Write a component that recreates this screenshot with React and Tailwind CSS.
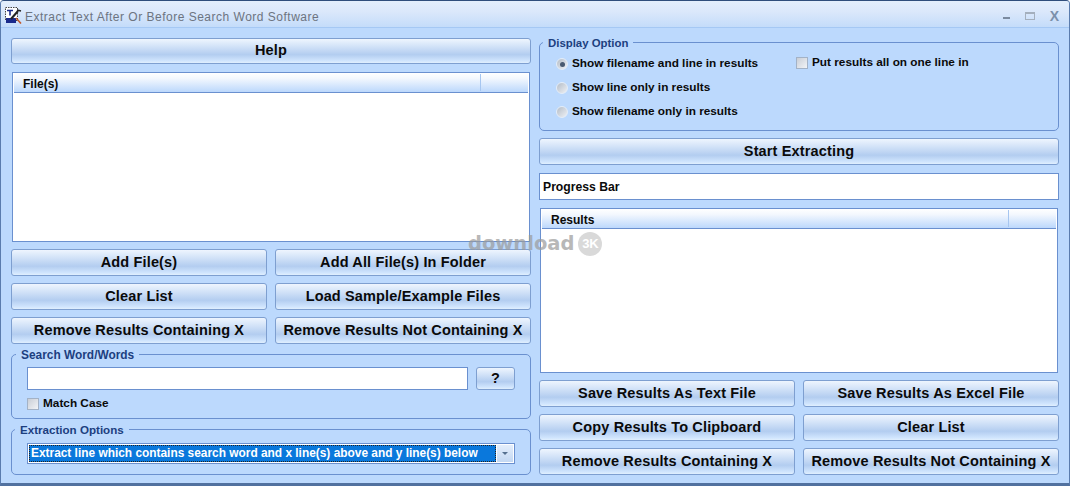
import React from "react";

const font = "font-['Liberation_Sans',Arial,sans-serif]";

const Btn = ({ children, className = "" }) => (
  <button className={`h-[27px] rounded-[3px] border border-[#7e9fd0] bg-[linear-gradient(#eef5fe_0%,#d3e3f8_30%,#b3cdf0_65%,#cfe4fd_90%,#e0effe_100%)] text-[14.5px] font-bold leading-none tracking-[0.15px] text-[#0a0a0a] whitespace-nowrap ${className}`}>
    {children}
  </button>
);

const Group = ({ title, className = "", titleClass = "left-[4px] text-[11.9px]", children }) => (
  <div className={`relative rounded-[5px] border border-[#6a90cf] ${className}`}>
    <span className={`absolute -top-[7px] bg-[#bcd9fd] px-[5px] font-bold leading-[14px] text-[#1c3f80] ${titleClass}`}>
      {title}
    </span>
    {children}
  </div>
);

const Radio = ({ checked, label }) => (
  <div className="flex h-[14px] items-center gap-[4px] text-[11.8px] font-bold text-[#0a0a0a]">
    <span className="flex h-[12px] w-[12px] items-center justify-center rounded-full border border-[#e4edf8] bg-[linear-gradient(135deg,#b4bcc6,#eef1f5)]">
      {checked && <span className="h-[5px] w-[5px] rounded-full bg-[#4a5a70]" />}
    </span>
    {label}
  </div>
);

const Check = ({ label, className = "" }) => (
  <div className={`flex items-center gap-[4px] text-[11.8px] font-bold text-[#0a0a0a] ${className}`}>
    <span className="h-[12px] w-[12px] border border-[#a3b2c6] bg-[linear-gradient(135deg,#c9ced6,#f2f4f7)]" />
    {label}
  </div>
);

const ListBox = ({ title, className = "" }) => (
  <div className={`mx-px flex flex-col border border-[#6a90cf] bg-white px-px ${className}`}>
    <div className="flex h-[20px] border-b border-[#6a90cf] bg-[linear-gradient(#ffffff,#f2f7fe_30%,#bcd8fc)]">
      <div className="flex-1 text-[12px] font-bold leading-[22px] text-[#0a0a0a]">{title}</div>
      <div className="my-[1px] h-[17px] w-[48px] border-l border-[#a6c6f0]" />
    </div>
  </div>
);

const Logo = () => (
  <svg width="17" height="17" viewBox="0 0 17 17" className="shrink-0">
    <rect x="0.5" y="0.5" width="12" height="13" fill="#fff" stroke="#444" strokeDasharray="1.5 1" />
    <path d="M2 3.5h6M5 3.5v5" stroke="#1a2a8c" strokeWidth="1.6" />
    <rect x="1" y="11" width="10" height="5" fill="#1a2a8c" />
    <path d="M6 12L13 4" stroke="#222" strokeWidth="2" />
    <path d="M11 11l5 5.5" stroke="#c0572b" strokeWidth="1.6" />
    <path d="M12 3l4 1" stroke="#222" strokeWidth="1.5" />
  </svg>
);

export default function App() {
  return (
    <div className={`${font} relative flex h-[486px] w-[1070px] flex-col overflow-hidden rounded-t-[4px] border-x border-b-[3px] border-t border-x-[#5a7cae] border-b-[#51719f] border-t-[#2f4d7c] bg-[#bcd9fd]`}>
      {/* title bar */}
      <div className="flex h-[27px] shrink-0 items-start border-b border-[#a5c8f4] bg-[linear-gradient(#e3eefc,#dbe8fb_40%,#c4dcfa)] pl-[4px] pr-[10px] pt-[6px]">
        <Logo />
        <span className="ml-[3px] mt-[3px] text-[12px] leading-[14px] tracking-[0.5px] text-[#6d7480]">
          Extract Text After Or Before Search Word Software
        </span>
        <div className="ml-auto flex items-start gap-[15px]">
          <span className="mt-[10px] h-[2px] w-[7px] bg-[#7b8ba0]" />
          <span className="mt-[5px] h-[8px] w-[10px] border border-t-2 border-[#a4afbd]" />
          <span className="text-[14px] font-bold leading-[18px] text-[#7b90ab]">X</span>
        </div>
      </div>

      {/* body */}
      <div className="flex flex-1 gap-[8px] pl-[10px] pr-[10px]">
        <div className="flex w-[520px] flex-col pt-[10px]">
          <Btn className="w-full !h-[26px] pb-[2px]">Help</Btn>
          <ListBox title={<span className="pl-[9px]">File(s)</span>} className="mt-[8px] h-[170px]" />
          <div className="mt-[7px] grid grid-cols-2 gap-x-[8px] gap-y-[7px]">
            <Btn>Add File(s)</Btn>
            <Btn>Add All File(s) In Folder</Btn>
            <Btn>Clear List</Btn>
            <Btn>Load Sample/Example Files</Btn>
            <Btn>Remove Results Containing X</Btn>
            <Btn>Remove Results Not Containing X</Btn>
          </div>
          <Group title="Search Word/Words" className="mt-[10px] h-[65px] pl-[15px] pr-[15px] pt-[12px]">
            <div className="flex gap-[8px]">
              <div className="h-[23px] flex-1 border border-[#6a90cf] bg-white" />
              <Btn className="!h-[23px] w-[39px]">?</Btn>
            </div>
            <Check label="Match Case" className="mt-[5px]" />
          </Group>
          <Group title="Extraction Options" titleClass="left-[3px] text-[11.6px]" className="mt-[10px] h-[46px] pl-[15px] pr-[15px] pt-[13px]">
            <div className="flex h-[21px] border border-[#6a90cf] bg-white p-[1px]">
              <div className="flex-1 overflow-hidden whitespace-nowrap border border-dotted border-[#222] bg-[#0a78dc] pl-[1px] text-[11.9px] font-bold leading-[15px] text-white">
                Extract line which contains search word and x line(s) above and y line(s) below
              </div>
              <div className="ml-[1px] flex w-[16px] items-center justify-center bg-[linear-gradient(#e4eefb,#c3d8f3)]">
                <span className="h-0 w-0 border-x-[3px] border-t-[3px] border-x-transparent border-t-[#55708f]" />
              </div>
            </div>
          </Group>
        </div>

        <div className="flex w-[520px] flex-col pt-[14px]">
          <Group title="Display Option" titleClass="left-[3px] text-[11.4px]" className="h-[89px]">
            <div className="flex pl-[16px] pt-[14px]">
              <div className="flex w-[240px] flex-col gap-[10px]">
                <Radio checked label="Show filename and line in results" />
                <Radio label="Show line only in results" />
                <Radio label="Show filename only in results" />
              </div>
              <Check label="Put results all on one line in" className="-mt-[1px] h-[14px]" />
            </div>
          </Group>
          <Btn className="mt-[7px] w-full">Start Extracting</Btn>
          <div className="mt-[8px] h-[27px] border border-[#6a90cf] bg-white pl-[3px] text-[12.2px] font-bold leading-[26px] text-[#0a0a0a]">
            Progress Bar
          </div>
          <ListBox title={<span className="pl-[9px]">Results</span>} className="mt-[8px] h-[165px]" />
          <div className="mt-[7px] grid grid-cols-2 gap-x-[8px] gap-y-[7px]">
            <Btn>Save Results As Text File</Btn>
            <Btn>Save Results As Excel File</Btn>
            <Btn>Copy Results To Clipboard</Btn>
            <Btn>Clear List</Btn>
            <Btn>Remove Results Containing X</Btn>
            <Btn>Remove Results Not Containing X</Btn>
          </div>
        </div>
      </div>

      {/* download3k watermark */}
      <div className="absolute left-[467px] top-[231px] flex items-center gap-[4px] opacity-70">
        <span className="font-['DejaVu_Sans',sans-serif] text-[19.5px] font-bold leading-none text-[#9a9a9a]">download</span>
        <span className="flex h-[24px] w-[24px] items-center justify-center rounded-full bg-[#c9c9c9] text-[13px] font-bold text-white">3K</span>
      </div>
    </div>
  );
}
